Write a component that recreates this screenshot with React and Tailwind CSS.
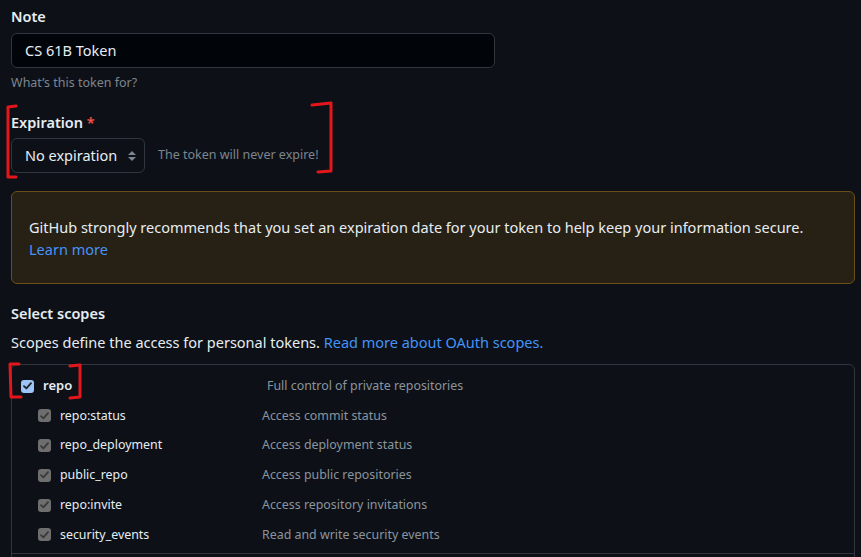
import React from "react";

const Check = ({ color }) => (
  <svg width="9" height="8" viewBox="0 0 9 8" fill="none">
    <path d="M1 4.2 L3.4 6.4 L8 1.2" stroke={color} strokeWidth="1.8" strokeLinecap="round" strokeLinejoin="round" />
  </svg>
);

const subScopes = [
  ["repo:status", "Access commit status"],
  ["repo_deployment", "Access deployment status"],
  ["public_repo", "Access public repositories"],
  ["repo:invite", "Access repository invitations"],
  ["security_events", "Read and write security events"],
];

export default function App() {
  return (
    <div className="relative h-[557px] overflow-hidden bg-[#0d1117] text-[#e6edf3] font-['Segoe_UI','Noto_Sans',sans-serif]">
      <div className="pl-[11px] pr-[6px] pt-[6px]">
        <div className="text-[14.5px] font-semibold leading-5">Note</div>
        <div className="mt-[7px] flex h-[35px] w-[484px] items-center rounded-md border border-[#30363d] bg-[#010409] px-[13px] text-[14.5px]">
          CS 61B Token
        </div>
        <div className="mt-[5px] text-[12.5px] leading-5 text-[#7d8590]">What’s this token for?</div>

        <div className="mt-[19px] text-[14.5px] font-semibold leading-5">
          Expiration <span className="text-[#f85149]">*</span>
        </div>
        <div className="mt-[6px] flex items-center gap-[13px]">
          <div className="flex h-[35px] w-[134px] items-center justify-between rounded-md border border-[#30363d] bg-[#0d1117] pl-[13px] pr-[7px] text-[14.5px]">
            <span>No expiration</span>
            <svg width="10" height="12" viewBox="0 0 10 12">
              <path d="M1 5 L5 1 L9 5 Z" fill="#7d8590" />
              <path d="M1 7 L5 11 L9 7 Z" fill="#7d8590" />
            </svg>
          </div>
          <div className="text-[12.5px] text-[#7d8590]">The token will never expire!</div>
        </div>

        <div className="mt-[18px] h-[93px] rounded-md border border-[#6a5016] bg-[#272115] px-[17px] pt-[24px] text-[14.5px] leading-[22px]">
          <div>GitHub strongly recommends that you set an expiration date for your token to help keep your information secure.</div>
          <div className="text-[#4493f8]">Learn more</div>
        </div>

        <div className="mt-[19px] text-[14.5px] font-semibold leading-5">Select scopes</div>
        <div className="mt-[9px] text-[14.5px] leading-5">
          Scopes define the access for personal tokens.{" "}
          <span className="text-[#4493f8]">Read more about OAuth scopes.</span>
        </div>

        <div className="mt-[12px] h-[260px] rounded-md border border-[#30363d]">
          <div className="border-b border-[#30363d] pt-[6px] pb-[3px]">
            <div className="flex h-[30px] items-center">
              <div className="ml-[9px] flex h-[13px] w-[13px] items-center justify-center rounded-[3px] bg-[#9cc4f8]">
                <Check color="#1f2328" />
              </div>
              <div className="ml-[9px] w-[224px] text-[13px] font-semibold">repo</div>
              <div className="text-[12.4px] text-[#8b949e]">Full control of private repositories</div>
            </div>
            {subScopes.map(([name, desc]) => (
              <div key={name} className="flex h-[29.75px] items-center">
                <div className="ml-[26px] flex h-[13px] w-[13px] items-center justify-center rounded-[3px] bg-[#6e6e6e]">
                  <Check color="#3a3a3a" />
                </div>
                <div className="ml-[9px] w-[202px] text-[12.4px] text-[#e6edf3]">{name}</div>
                <div className="text-[12.4px] text-[#8b949e]">{desc}</div>
              </div>
            ))}
          </div>
        </div>
      </div>

      <svg className="pointer-events-none absolute inset-0" width="861" height="557" fill="none">
        <g stroke="#e3161b" strokeWidth="3" strokeLinecap="round" strokeLinejoin="round">
          <path d="M16 106 L8 107 L8 177 L16 177" />
          <path d="M312 105 L331 103 L331 171 L318 172" />
          <path d="M19 364 L10 364 L11 397 L21 397" />
          <path d="M70 366 L80 365 L80 397 L70 398" />
        </g>
      </svg>
    </div>
  );
}
